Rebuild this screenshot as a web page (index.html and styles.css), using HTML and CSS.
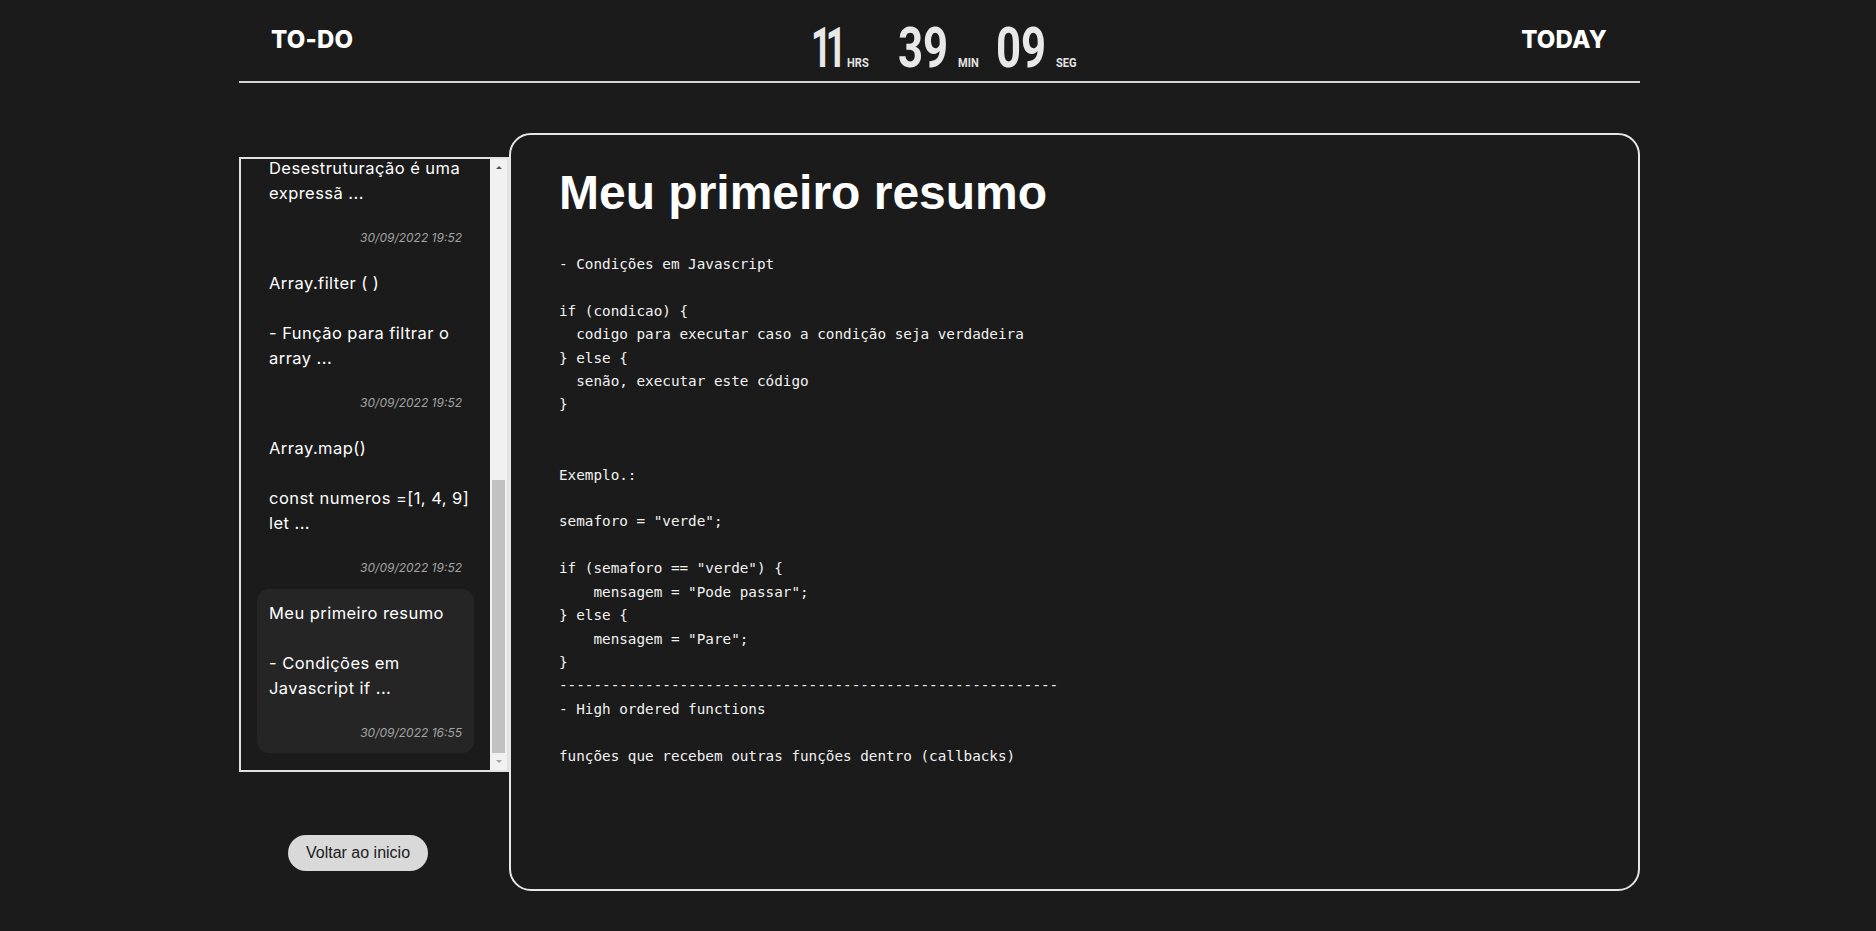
FILE: index.html
```html
<!DOCTYPE html>
<html lang="pt-BR">
<head>
<meta charset="utf-8">
<title>TO-DO</title>
<link rel="stylesheet" href="styles.css">
</head>
<body>
<div class="app">
  <header class="topbar">
    <h2 class="brand">TO-DO</h2>
    <div class="clock">
      <div class="clock-unit clock-unit-hrs"><span class="clock-num clock-num-ones">11</span><span class="clock-label">HRS</span></div>
      <div class="clock-unit"><span class="clock-num">39</span><span class="clock-label">MIN</span></div>
      <div class="clock-unit"><span class="clock-num">09</span><span class="clock-label">SEG</span></div>
    </div>
    <h2 class="brand brand-right">TODAY</h2>
  </header>

  <main class="content">
    <aside class="sidebar">
      <div class="notes">
        <div class="notes-view">
          <div class="notes-inner">
            <div class="note">
              <p class="note-text">Desestruturação<br><br>Desestruturação é uma<br>expressã ...</p>
              <p class="note-date">30/09/2022 19:52</p>
            </div>
            <div class="note">
              <p class="note-text">Array.filter ( )<br><br>- Função para filtrar o<br>array ...</p>
              <p class="note-date">30/09/2022 19:52</p>
            </div>
            <div class="note">
              <p class="note-text">Array.map()<br><br>const numeros =[1, 4, 9]<br>let ...</p>
              <p class="note-date">30/09/2022 19:52</p>
            </div>
            <div class="note note-active">
              <p class="note-text">Meu primeiro resumo<br><br>- Condições em<br>Javascript if ...</p>
              <p class="note-date">30/09/2022 16:55</p>
            </div>
          </div>
        </div>
        <div class="scrollbar">
          <div class="sb-btn"><span class="sb-arrow-up"></span></div>
          <div class="sb-track"><div class="sb-thumb"></div></div>
          <div class="sb-btn"><span class="sb-arrow-down"></span></div>
        </div>
      </div>
      <button class="back-btn" type="button">Voltar ao inicio</button>
    </aside>

    <article class="viewer">
      <h1 class="viewer-title">Meu primeiro resumo</h1>
<pre class="viewer-body">- Condições em Javascript

if (condicao) {
  codigo para executar caso a condição seja verdadeira
} else {
  senão, executar este código
}


Exemplo.:

semaforo = "verde";

if (semaforo == "verde") {
    mensagem = "Pode passar";
} else {
    mensagem = "Pare";
}
----------------------------------------------------------
- High ordered functions

funções que recebem outras funções dentro (callbacks)</pre>
    </article>
  </main>
</div>
</body>
</html>
```

FILE: styles.css
```css
html, body {
  margin: 0;
  padding: 0;
  background: #1b1b1b;
}

body {
  color: #ffffff;
  font-family: "Inter", "Noto Sans", sans-serif;
}

.app {
  width: 1401px;
  margin-left: calc(50% - 699px);
}

/* ---------- header ---------- */
.topbar {
  display: grid;
  grid-template-columns: 1fr auto 1fr;
  align-items: center;
  height: 81px;
  padding: 0 33px 0 32px;
  border-bottom: 2px solid #d6d6d6;
}

.brand {
  margin: 0;
  font-family: "Inter", "Noto Sans", sans-serif;
  font-weight: 800;
  font-size: 24px;
  line-height: 1.2;
  letter-spacing: 0.2px;
  color: #ffffff;
}

.brand-right {
  justify-self: end;
}

.clock {
  display: flex;
  gap: 14px;
  margin-top: 14px;
  margin-left: 14px;
}

.clock-unit {
  display: flex;
  align-items: baseline;
  gap: 11px;
}

.clock-unit-hrs {
  margin-right: 11px;
}

.clock-num {
  display: inline-block;
  width: 49px;
  white-space: nowrap;
  font-family: "Roboto", "Liberation Sans", sans-serif;
  font-weight: 700;
  font-size: 56px;
  line-height: 1;
  color: #e8e8e8;
  transform: scaleX(0.78);
  transform-origin: 0 50%;
}

.clock-num-ones {
  width: 25px;
  letter-spacing: -9px;
  transform: scaleX(0.64);
}

.clock-label {
  display: inline-block;
  font-family: "Roboto", "Liberation Sans", sans-serif;
  font-weight: 700;
  font-size: 13px;
  color: #e4e4e4;
  transform: scaleX(0.85);
  transform-origin: 0 50%;
}

/* ---------- content ---------- */
.content {
  display: flex;
  margin-top: 50px;
}

.sidebar {
  width: 270px;
  flex: none;
  display: flex;
  flex-direction: column;
  align-items: flex-start;
  padding-top: 24px;
}

.notes {
  width: 270px;
  height: 615px;
  box-sizing: border-box;
  border: 2px solid #e2e2e2;
  display: flex;
}

.notes-view {
  flex: 1;
  display: flex;
  flex-direction: column-reverse;
  overflow: hidden;
}

.notes-inner {
  flex: none;
  display: flex;
  flex-direction: column;
  gap: 1px;
  padding: 16px 16px 17px;
}

.scrollbar {
  width: 17px;
  flex: none;
  display: flex;
  flex-direction: column;
  background: #f1f1f1;
}

.sb-btn {
  height: 17px;
  flex: none;
  display: flex;
  align-items: center;
  justify-content: center;
}

.sb-arrow-up {
  width: 0;
  height: 0;
  border-left: 3px solid transparent;
  border-right: 3px solid transparent;
  border-bottom: 3px solid #505050;
}

.sb-arrow-down {
  width: 0;
  height: 0;
  border-left: 3px solid transparent;
  border-right: 3px solid transparent;
  border-top: 3px solid #a3a3a3;
}

.sb-track {
  flex: 1;
  display: flex;
  flex-direction: column;
  justify-content: flex-end;
}

.sb-thumb {
  height: 273px;
  margin: 0 2px;
  background: #c1c1c1;
}

.note {
  padding: 12px 12px 11px;
  border-radius: 12px;
}

.note-active {
  background: #252525;
}

.note-text {
  margin: 0;
  font-family: "Inter", "Noto Sans", sans-serif;
  font-size: 16.5px;
  letter-spacing: 0.45px;
  line-height: 25px;
  white-space: nowrap;
  color: #ffffff;
}

.note-date {
  margin: 23px 0 0;
  text-align: right;
  font-family: "Inter", "Noto Sans", sans-serif;
  font-size: 12px;
  line-height: 18px;
  font-style: italic;
  color: #a3a3a3;
}

.back-btn {
  margin: 63px 0 0 49px;
  height: 36px;
  padding: 0 18px;
  border: none;
  border-radius: 18px;
  background: #d9d9d9;
  color: #1b1b1b;
  font-family: "Liberation Sans", Arial, sans-serif;
  font-size: 16px;
}

/* ---------- viewer ---------- */
.viewer {
  flex: 1;
  box-sizing: border-box;
  height: 758px;
  border: 2px solid #e6e6e6;
  border-radius: 22px;
  padding: 30px 46px 28px 48px;
}

.viewer-title {
  margin: 0;
  font-family: "Liberation Sans", Arial, sans-serif;
  font-weight: 700;
  font-size: 48px;
  line-height: 55px;
  color: #ffffff;
}

.viewer-body {
  margin: 33px 0 0;
  font-family: "DejaVu Sans Mono", monospace;
  font-size: 14.3px;
  line-height: 23.4px;
  color: #f2f2f2;
}
```
